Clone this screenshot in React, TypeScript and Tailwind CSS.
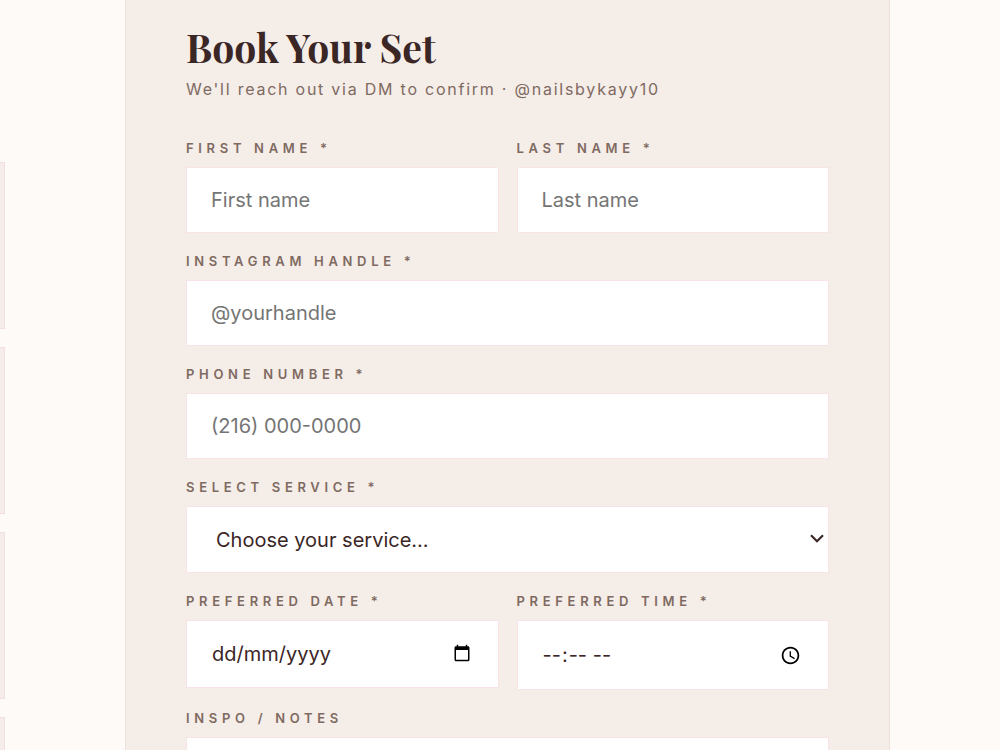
import type { ReactNode } from "react";
import { clsx } from "clsx";

const cards = ["classic", "gel", "acrylic", "art"];

const services = ["Gel Manicure", "Acrylic Full Set", "Fill", "Nail Art"];

const control =
  "block w-full rounded-none border border-[#f8e4e6] bg-white text-[20px] leading-6 text-[#3b2626] outline-none";

const textInput = clsx(control, "h-[66px] px-6 placeholder:text-[#757575]");

function Field({
  id,
  label,
  children,
}: {
  id: string;
  label: string;
  children: ReactNode;
}) {
  return (
    <div className="min-w-0">
      <label
        htmlFor={id}
        className="mb-2 block text-[13px] leading-[21px] font-semibold tracking-[0.36em] text-[#7f6a61] uppercase"
      >
        {label}
      </label>
      {children}
    </div>
  );
}

export default function App() {
  return (
    <div className="flex h-screen overflow-hidden bg-[#fefaf7] font-['Inter',sans-serif]">
      <aside className="flex w-[5px] shrink-0 flex-col gap-[18px] pt-[162px]">
        {cards.map((card) => (
          <div
            key={card}
            className="h-[167px] shrink-0 border border-l-0 border-[#f2dfdf] bg-[#f6edea]"
          />
        ))}
      </aside>

      <main className="mr-[110px] ml-[120px] min-w-0 flex-1">
        <form className="border-x border-[#efdfdb] bg-[#f5ede8] px-[60px] pt-5">
          <h1 className="font-['Playfair_Display','Liberation_Serif',serif] text-[39px] leading-[54px] font-bold text-[#3b2626]">
            Book Your Set
          </h1>
          <p className="text-[16px] leading-[30px] tracking-[0.11em] text-[#7f6a61]">
            We'll reach out via DM to confirm · @nailsbykayy10
          </p>

          <div className="mt-[34px] flex flex-col gap-[18px]">
            <div className="grid grid-cols-2 gap-[18px]">
              <Field id="first" label="First Name *">
                <input
                  id="first"
                  type="text"
                  placeholder="First name"
                  className={textInput}
                />
              </Field>
              <Field id="last" label="Last Name *">
                <input
                  id="last"
                  type="text"
                  placeholder="Last name"
                  className={textInput}
                />
              </Field>
            </div>

            <Field id="instagram" label="Instagram Handle *">
              <input
                id="instagram"
                type="text"
                placeholder="@yourhandle"
                className={textInput}
              />
            </Field>

            <Field id="phone" label="Phone Number *">
              <input
                id="phone"
                type="tel"
                placeholder="(216) 000-0000"
                className={textInput}
              />
            </Field>

            <Field id="service" label="Select Service *">
              <div className="relative">
                <select
                  id="service"
                  defaultValue=""
                  className={clsx(
                    control,
                    "h-[67px] appearance-none pr-10 pl-[29px]"
                  )}
                >
                  <option value="">Choose your service...</option>
                  {services.map((s) => (
                    <option key={s}>{s}</option>
                  ))}
                </select>
                <svg
                  viewBox="0 0 14 9"
                  className="pointer-events-none absolute top-7 right-[5px] h-[9px] w-[14px]"
                  fill="none"
                  stroke="#3b2626"
                  strokeWidth="2.2"
                >
                  <path d="M1 1.2l6 6 6-6" />
                </svg>
              </div>
            </Field>

            <div className="grid grid-cols-2 items-start gap-[18px]">
              <Field id="date" label="Preferred Date *">
                <div className="relative">
                  <input
                    id="date"
                    type="text"
                    inputMode="numeric"
                    placeholder="dd/mm/yyyy"
                    className={clsx(
                      control,
                      "h-[68px] px-[25px] placeholder:text-[#3b2626]"
                    )}
                  />
                  <button
                    type="button"
                    aria-label="Open calendar"
                    className="absolute top-6 right-7 h-[18px] w-[18px]"
                  >
                    <svg viewBox="0 0 24 24" className="h-[18px] w-[18px]">
                      <path d="M20 3h-1V1h-2v2H7V1H5v2H4c-1.1 0-2 .9-2 2v16c0 1.1.9 2 2 2h16c1.1 0 2-.9 2-2V5c0-1.1-.9-2-2-2zm0 18H4V8h16v13z" />
                    </svg>
                  </button>
                </div>
              </Field>
              <Field id="time" label="Preferred Time *">
                <input
                  id="time"
                  type="time"
                  className={clsx(control, "h-[70px] px-6")}
                />
              </Field>
            </div>

            <Field id="notes" label="Inspo / Notes">
              <textarea
                id="notes"
                rows={4}
                className={clsx(control, "resize-none px-6 py-5")}
              />
            </Field>
          </div>
        </form>
      </main>
    </div>
  );
}
